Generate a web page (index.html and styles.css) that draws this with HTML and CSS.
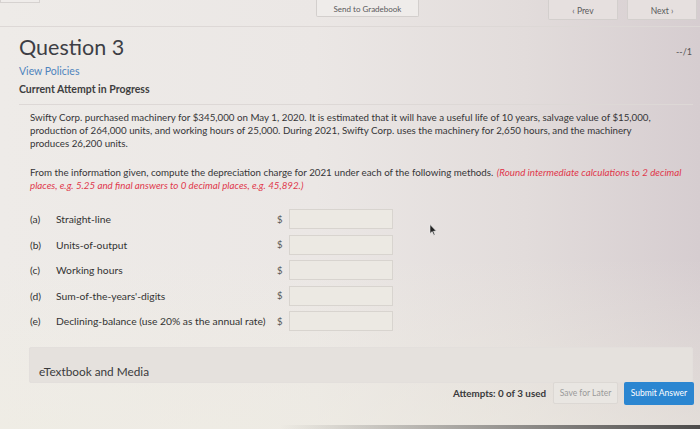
FILE: index.html
```html
<!DOCTYPE html>
<html lang="en">
<head>
<meta charset="utf-8">
<title>Question 3</title>
<link rel="stylesheet" href="styles.css">
</head>
<body>
<div class="page">
  <header class="topbar">
    <div class="stub"></div>
    <button class="tbtn send">Send to Gradebook</button>
    <div class="nav">
      <button class="tbtn prev">&#8249; Prev</button>
      <button class="tbtn next">Next &#8250;</button>
    </div>
  </header>

  <section class="qhead">
    <div class="titlerow">
      <h1 class="qtitle">Question 3</h1>
      <span class="score">--/1</span>
    </div>
    <a class="policies">View Policies</a>
    <div class="attempt">Current Attempt in Progress</div>
  </section>

  <section class="qbody">
    <p class="para p1">Swifty Corp. purchased machinery for $345,000 on May 1, 2020. It is estimated that it will have a useful life of 10 years, salvage value of $15,000, production of 264,000 units, and working hours of 25,000. During 2021, Swifty Corp. uses the machinery for 2,650 hours, and the machinery produces 26,200 units.</p>
    <p class="para p2">From the information given, compute the depreciation charge for 2021 under each of the following methods. <em class="hint">(Round intermediate calculations to 2 decimal places, e.g. 5.25 and final answers to 0 decimal places, e.g. 45,892.)</em></p>

    <div class="answers">
      <span class="letter">(a)</span><span class="method">Straight-line</span><span class="cur">$</span><span class="box"></span>
      <span class="letter">(b)</span><span class="method">Units-of-output</span><span class="cur">$</span><span class="box"></span>
      <span class="letter">(c)</span><span class="method">Working hours</span><span class="cur">$</span><span class="box"></span>
      <span class="letter">(d)</span><span class="method">Sum-of-the-years'-digits</span><span class="cur">$</span><span class="box"></span>
      <span class="letter">(e)</span><span class="method">Declining-balance (use 20% as the annual rate)</span><span class="cur">$</span><span class="box"></span>
    </div>

    <div class="media">eTextbook and Media</div>

    <div class="footer">
      <span class="attempts">Attempts: 0 of 3 used</span>
      <button class="save">Save for Later</button>
      <button class="submit">Submit Answer</button>
    </div>
  </section>

  <svg class="cursor" width="8" height="12" viewBox="0 0 8 12"><path d="M1 0.5 L1 9.5 L3.2 7.6 L4.8 11.2 L6 10.7 L4.5 7.2 L7.3 7.1 Z" fill="#222" stroke="#eee" stroke-width="0.6"/></svg>
  <div class="bezel"></div>
</div>
</body>
</html>
```

FILE: styles.css
```css
* { box-sizing: border-box; }
html, body { margin: 0; padding: 0; }
body {
  width: 700px;
  height: 429px;
  overflow: hidden;
  font-family: Lato, "Open Sans", sans-serif;
  color: #3a3a3c;
}
.page {
  position: relative;
  width: 700px;
  height: 429px;
  background:
    linear-gradient(to bottom, rgba(255,255,255,0) 60%, rgba(240,238,226,0.5) 100%),
    linear-gradient(to right, #eeebe8 0%, #ebe7e5 45%, #e2dcdb 75%, #d6cdd0 100%);
}
.topbar {
  height: 27px;
  border-bottom: 1px solid #ddd8d6;
  display: flex;
  align-items: flex-start;
  padding: 0 3px 0 0;
}
.stub {
  width: 40px;
  height: 3px;
  border: 1px solid #d6d2d0;
  border-top: none;
  background: #efecea;
}
.tbtn {
  font-family: Lato, sans-serif;
  font-size: 8px;
  color: #5a5a5c;
  background: #efecea;
  border: 1px solid #d3cfcd;
  border-top: none;
  border-radius: 0 0 2px 2px;
  padding: 0;
}
.send {
  margin-left: 276px;
  width: 103px;
  height: 17px;
  padding-top: 1px;
}
.nav {
  margin-left: auto;
  display: flex;
  gap: 9px;
}
.prev, .next {
  width: 70px;
  height: 20px;
  padding-top: 2px;
  background: #e6e0df;
  font-size: 8.5px;
}
.qhead {
  margin: 0 7px 0 19px;
  padding-bottom: 9px;
  border-bottom: 1px solid #ddd8d6;
}
.titlerow {
  display: flex;
  justify-content: space-between;
  align-items: baseline;
  padding-top: 7px;
}
.qtitle {
  margin: 0;
  font-size: 21.5px;
  font-weight: 400;
  color: #3d3e45;
  line-height: 26px;
}
.score {
  font-size: 9px;
  color: #555;
  margin-right: 1px;
}
.policies {
  display: block;
  font-size: 10.5px;
  color: #4f84bd;
  margin-top: 5px;
  line-height: 12px;
}
.attempt {
  font-size: 10.5px;
  font-weight: 700;
  color: #3e3e40;
  margin-top: 6px;
  line-height: 12px;
}
.qbody {
  padding: 6px 7px 0 30px;
}
.para {
  margin: 0 0 16px 0;
  font-size: 9.75px;
  line-height: 13px;
  color: #353537;
}
.p1 { width: 640px; }
.p2 { width: 664px; }
.hint {
  color: #e0384c;
  font-style: italic;
  margin-left: 1px;
}
.answers {
  display: grid;
  grid-template-columns: 26px 221px 12px 104px;
  grid-auto-rows: 20px;
  row-gap: 5.5px;
  align-items: center;
  margin-top: 17px;
  font-size: 10.3px;
  color: #333;
}
.cur { color: #555; font-size: 9.5px; }
.box {
  height: 20px;
  border: 1px solid #d8d4cf;
  background: #ece9e3;
}
.media {
  margin: 16px 0 0 -1px;
  height: 36px;
  border: 1px solid #e3dfdc;
  border-radius: 2px;
  background: #e5e1dd;
  font-size: 11.8px;
  color: #3a3a3c;
  padding: 17px 0 0 9px;
  line-height: 14px;
}
.footer {
  display: flex;
  justify-content: flex-end;
  align-items: center;
  gap: 6px;
  margin-top: -2px;
  margin-right: -1px;
  height: 24px;
}
.attempts {
  font-size: 9.8px;
  font-weight: 700;
  color: #3a3a3c;
  margin-right: 1px;
}
.save {
  width: 65px;
  height: 22px;
  border: 1px solid #dcd8d4;
  background: #e9e6e2;
  border-radius: 2px;
  color: #9a9a9a;
  font-family: Lato, sans-serif;
  font-size: 8.5px;
  padding: 0;
}
.submit {
  width: 70px;
  height: 23px;
  border: none;
  background: #2b86d1;
  border-radius: 2px;
  color: #fff;
  font-family: Lato, sans-serif;
  font-size: 8.5px;
  padding: 0;
}
.cursor {
  position: absolute;
  left: 429px;
  top: 224px;
}
.bezel {
  position: absolute;
  left: 0;
  right: 0;
  bottom: 0;
  height: 4px;
  background: linear-gradient(to right, rgba(60,60,60,0) 40%, rgba(40,40,40,0.8) 100%);
}
```
